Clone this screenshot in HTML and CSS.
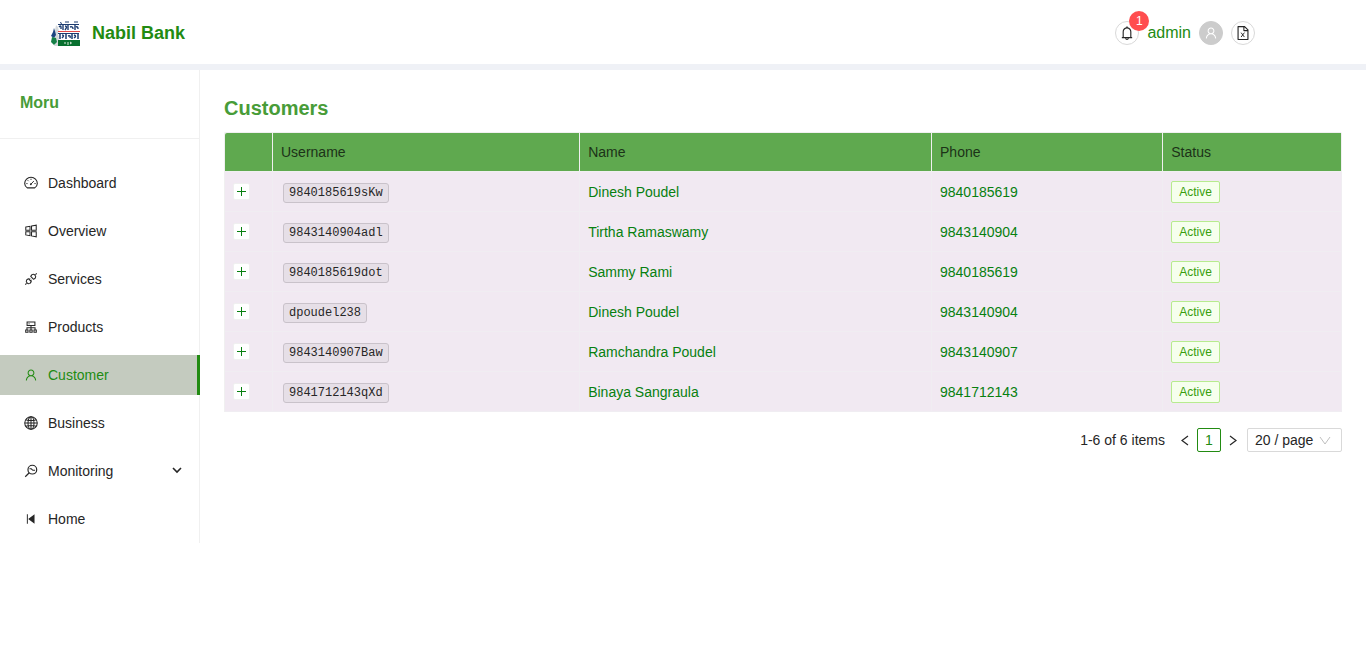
FILE: index.html
```html
<!DOCTYPE html>
<html lang="en">
<head>
<meta charset="utf-8">
<title>Nabil Bank - Customers</title>
<link rel="stylesheet" href="styles.css">
</head>
<body>
<svg class="sprite" aria-hidden="true">
  <symbol id="user" viewBox="0 0 1024 1024"><path fill="currentColor" d="M858.5 763.6a374 374 0 00-80.6-119.5 375.63 375.63 0 00-119.5-80.6c-.4-.2-.8-.3-1.2-.5C719.5 518 760 444.7 760 362c0-137-111-248-248-248S264 225 264 362c0 82.7 40.5 156 102.8 201.1-.4.2-.8.3-1.2.5-44.8 18.9-85 46-119.5 80.6a375.63 375.63 0 00-80.6 119.5A371.7 371.7 0 00136 901.8a8 8 0 008 8.2h60c4.4 0 7.9-3.5 8-7.8 2-77.2 33-149.5 87.8-204.3 56.7-56.7 132-87.9 212.2-87.9s155.5 31.2 212.2 87.9C779 752.7 810 825 812 902.2c.1 4.4 3.6 7.8 8 7.8h60a8 8 0 008-8.2c-1-47.8-10.9-94.3-29.5-138.2zM512 534c-45.9 0-89.1-17.9-121.6-50.4S340 407.9 340 362c0-45.9 17.9-89.1 50.4-121.6S466.1 190 512 190s89.1 17.9 121.6 50.4S684 316.1 684 362c0 45.9-17.9 89.1-50.4 121.6S557.9 534 512 534z"/></symbol>
  <symbol id="bell" viewBox="0 0 1024 1024"><path fill="currentColor" d="M816 768h-24V428c0-141.1-104.3-257.7-240-277.1V112c0-22.1-17.9-40-40-40s-40 17.900-40 40v38.900c-135.700 19.400-240 136-240 277.100v340h-24c-17.700 0-32 14.300-32 32v32c0 4.400 3.600 8 8 8h216c0 61.800 50.200 112 112 112s112-50.200 112-112h216c4.400 0 8-3.600 8-8v-32c0-17.700-14.300-32-32-32zM512 888c-26.500 0-48-21.500-48-48h96c0 26.500-21.500 48-48 48zM304 768V428c0-55.600 21.600-107.800 60.900-147.100S456.400 220 512 220c55.600 0 107.800 21.600 147.100 60.900S720 372.400 720 428v340H304z"/></symbol>
  <symbol id="sheet" viewBox="0 0 1024 1024"><path fill="currentColor" d="M854.6 288.6L639.4 73.4c-6-6-14.1-9.4-22.6-9.4H192c-17.7 0-32 14.3-32 32v832c0 17.7 14.3 32 32 32h640c17.7 0 32-14.3 32-32V311.3c0-8.5-3.4-16.7-9.4-22.7zM790.2 326H602V137.8L790.2 326zm1.8 562H232V136h302v216a42 42 0 0042 42h216v494z"/><path fill="none" stroke="currentColor" stroke-width="60" d="M390 490L600 770M600 490L390 770"/></symbol>
  <symbol id="dashboard" viewBox="0 0 1024 1024"><g fill="none" stroke="currentColor" stroke-width="80"><path d="M240 870C125 790 50 680 50 550a462 462 0 01924 0c0 130-75 240-190 320z" stroke-linejoin="round"/><path d="M512 200v90M170 552h90M764 552h90M270 310l64 64M512 590L720 370" stroke-width="68"/></g><circle cx="500" cy="600" r="68" fill="currentColor"/></symbol>
  <symbol id="windows" viewBox="0 0 1024 1024"><path fill="none" stroke="currentColor" stroke-width="76" d="M130 225l310-55v290H130zM550 152l345-64v372H550zM130 565h310v290l-310-55zM550 565h345v372l-345-64z"/></symbol>
  <symbol id="api" viewBox="0 0 1024 1024"><g fill="none" stroke="currentColor" stroke-width="76" stroke-linejoin="round"><path d="M490 320L704 534 830 440A180 180 0 00584 194zM534 704L320 490 194 584A180 180 0 00440 830zM840 184l90-90M184 840l-90 90M380 550l75-75M474 644l75-75"/></g></symbol>
  <symbol id="cluster" viewBox="0 0 1024 1024"><g fill="none" stroke="currentColor" stroke-width="76"><path d="M226 144h572v262H226zM512 406v318M216 724V564h592v160M124 724h170v170H124zM427 724h170v170H427zM730 724h170v170H730z"/></g><circle cx="370" cy="276" r="46" fill="currentColor"/></symbol>
  <symbol id="globe" viewBox="0 0 1024 1024"><g fill="none" stroke="currentColor" stroke-width="76"><circle cx="512" cy="512" r="458"/><ellipse cx="512" cy="512" rx="220" ry="458"/><path d="M512 60v900M60 512h900M130 270q382 130 764 0M130 754q382-130 764 0"/></g></symbol>
  <symbol id="monitor" viewBox="0 0 1024 1024"><g fill="none" stroke="currentColor" stroke-width="86"><circle cx="610" cy="414" r="320"/><path d="M385 640L90 935"/><path d="M400 350h130l120 110h160" stroke-width="76"/></g></symbol>
  <symbol id="back" viewBox="0 0 1024 1024"><path fill="currentColor" d="M210 165h70v694h-70zM770 160v704L330 528q-16-16 0-32z"/></symbol>
  <symbol id="chevron" viewBox="0 0 12 12"><path d="M1 2l5 7 5-7" fill="none" stroke="currentColor"/></symbol>
  <symbol id="plus" viewBox="0 0 15 15"><path d="M3 7.5h9M7.5 3v9" fill="none" stroke="currentColor"/></symbol>
</svg>

<header class="header">
  <div class="brand">
    <svg class="logo" viewBox="0 0 30 26" aria-hidden="true">
      <path fill="#d5d9dc" d="M6 4q4 3 2 9 2 4 0 12H4q3-5 0-9 1-7 2-12z"/>
      <path fill="#1c4480" d="M4 7l1 3 1 4-2 3-3-2 2-4z"/>
      <path fill="#168047" d="M2 16l4 1 1 4-3 3-3-3z"/>
      <g fill="none" stroke="#1d3c70">
        <path d="M10 1.500l2 1M15 1h4M24 1h4"/>
        <path d="M8 3.500h21" stroke-width="1"/>
        <path d="M9 6q2-2 2 0v2M13 4v5M15 5q3 0 0 4M18 4v5M20 6q3-1 3 2M25 4v5M26 6q2-1 2 2" stroke-width="1.400"/>
        <path d="M8 12.500h21" stroke-width="1"/>
        <path d="M10 13v5M12 14q3 0 0 3M16 13v5M18 15q3-1 2 2M22 13v5M24 14q3 1 0 3M28 13v5" stroke-width="1.500"/>
      </g>
      <path fill="#e04848" d="M8 10h22v1H8z"/>
      <path fill="#08702f" d="M8 19h22v6H8z"/>
      <path d="M14 22h2M18 21v3M20 21q3 1 0 2" fill="none" stroke="#dcebdd"/>
    </svg>
    <span>Nabil Bank</span>
  </div>
  <div class="tools">
    <button class="round" type="button" aria-label="Notifications"><svg class="icon"><use href="#bell"/></svg><span class="badge">1</span></button>
    <span class="account">admin</span>
    <span class="round avatar"><svg class="icon"><use href="#user"/></svg></span>
    <button class="round" type="button" aria-label="Export to spreadsheet"><svg class="icon"><use href="#sheet"/></svg></button>
  </div>
</header>

<div class="layout">
  <aside class="sidebar">
    <div class="group">Moru</div>
    <nav class="menu">
      <a class="item" href="#"><svg class="icon"><use href="#dashboard"/></svg>Dashboard</a>
      <a class="item" href="#"><svg class="icon"><use href="#windows"/></svg>Overview</a>
      <a class="item" href="#"><svg class="icon"><use href="#api"/></svg>Services</a>
      <a class="item" href="#"><svg class="icon"><use href="#cluster"/></svg>Products</a>
      <a class="item selected" href="#" aria-current="page"><svg class="icon"><use href="#user"/></svg>Customer</a>
      <a class="item" href="#"><svg class="icon"><use href="#globe"/></svg>Business</a>
      <button class="item" type="button" aria-expanded="false"><svg class="icon"><use href="#monitor"/></svg>Monitoring<svg class="expand" viewBox="0 0 10 10"><path d="M1 2l4 4 4-4" fill="none" stroke="currentColor" stroke-width="1.600"/></svg></button>
      <a class="item" href="#"><svg class="icon"><use href="#back"/></svg>Home</a>
    </nav>
  </aside>

  <main class="content">
    <h1 class="title">Customers</h1>
    <table class="table">
      <colgroup><col class="col-open"><col class="col-user"><col class="col-name"><col class="col-phone"><col></colgroup>
      <thead><tr><th></th><th>Username</th><th>Name</th><th>Phone</th><th>Status</th></tr></thead>
      <tbody>
        <tr><td><button class="open" type="button" aria-label="Expand row"><svg><use href="#plus"/></svg></button></td><td><code class="code">9840185619sKw</code></td><td>Dinesh Poudel</td><td>9840185619</td><td><span class="tag">Active</span></td></tr>
        <tr><td><button class="open" type="button" aria-label="Expand row"><svg><use href="#plus"/></svg></button></td><td><code class="code">9843140904adl</code></td><td>Tirtha Ramaswamy</td><td>9843140904</td><td><span class="tag">Active</span></td></tr>
        <tr><td><button class="open" type="button" aria-label="Expand row"><svg><use href="#plus"/></svg></button></td><td><code class="code">9840185619dot</code></td><td>Sammy Rami</td><td>9840185619</td><td><span class="tag">Active</span></td></tr>
        <tr><td><button class="open" type="button" aria-label="Expand row"><svg><use href="#plus"/></svg></button></td><td><code class="code">dpoudel238</code></td><td>Dinesh Poudel</td><td>9843140904</td><td><span class="tag">Active</span></td></tr>
        <tr><td><button class="open" type="button" aria-label="Expand row"><svg><use href="#plus"/></svg></button></td><td><code class="code">9843140907Baw</code></td><td>Ramchandra Poudel</td><td>9843140907</td><td><span class="tag">Active</span></td></tr>
        <tr><td><button class="open" type="button" aria-label="Expand row"><svg><use href="#plus"/></svg></button></td><td><code class="code">9841712143qXd</code></td><td>Binaya Sangraula</td><td>9841712143</td><td><span class="tag">Active</span></td></tr>
      </tbody>
    </table>
    <div class="pagination">
      <span class="total">1-6 of 6 items</span>
      <button class="page" type="button" aria-label="Previous page"><svg viewBox="0 0 12 12"><path d="M9 2L3 6.500 9 11" fill="none" stroke="currentColor" stroke-width="1.200"/></svg></button>
      <button class="page current" type="button">1</button>
      <button class="page" type="button" aria-label="Next page"><svg viewBox="0 0 12 12"><path d="M3 2l6 4.500L3 11" fill="none" stroke="currentColor" stroke-width="1.200"/></svg></button>
      <span class="size">
        <select class="size-select" aria-label="Page size"><option>20 / page</option><option>50 / page</option></select>
        <svg class="size-arrow"><use href="#chevron"/></svg>
      </span>
    </div>
  </main>
</div>
</body>
</html>
```
FILE: styles.css
```css
* { box-sizing: border-box; }

body {
  margin: 0;
  background: #fff;
  color: #262626;
  font: 14px/22px "Liberation Sans", Arial, sans-serif;
}

button, select { font: inherit; color: inherit; margin: 0; cursor: pointer; }
svg { display: block; flex: none; }
.sprite { position: absolute; width: 0; height: 0; }
.icon { width: 14px; height: 14px; }

.header {
  display: flex;
  align-items: center;
  justify-content: space-between;
  height: 70px;
  padding: 2px 111px 0 50px;
  border-bottom: 6px solid #eff1f6;
}
.brand {
  display: flex;
  align-items: center;
  gap: 12px;
  color: #228b12;
  font-size: 18px;
  font-weight: bold;
}
.logo { width: 30px; height: 26px; margin-top: 2px; }
.tools { display: flex; align-items: center; gap: 8px; }
.round {
  position: relative;
  display: flex;
  align-items: center;
  justify-content: center;
  width: 24px;
  height: 24px;
  padding: 0;
  border: 1px solid #d9d9d9;
  border-radius: 50%;
  background: #fff;
}
.round .icon { width: 16px; height: 16px; }
.avatar { border-color: #ccc; background: #ccc; color: #fff; }
.round.avatar .icon { width: 14px; height: 14px; }
.badge {
  position: absolute;
  top: -11px;
  right: -11px;
  width: 20px;
  height: 20px;
  border-radius: 10px;
  background: #ff4d4f;
  color: #fff;
  font-size: 12px;
  line-height: 20px;
  text-align: center;
}
.account { color: #228b12; font-size: 16px; }

.layout { display: flex; align-items: flex-start; }
.sidebar { flex: none; width: 200px; border-right: 1px solid #f0f0f0; }
.group {
  padding: 22px 20px 24px;
  border-bottom: 1px solid #f0f0f0;
  color: #489c38;
  font-size: 16px;
  font-weight: bold;
}
.menu {
  display: flex;
  flex-direction: column;
  gap: 8px;
  margin-right: -1px;
  padding: 24px 0 4px;
}
.item {
  display: flex;
  align-items: center;
  gap: 10px;
  height: 40px;
  padding: 0 18px 0 24px;
  border: 0;
  background: none;
  color: #262626;
  text-decoration: none;
}
.selected {
  border-right: 3px solid #228b12;
  background: #c4cbbf;
  color: #228b12;
}
.expand { width: 10px; height: 10px; margin-left: auto; }

.content { flex: 1; min-width: 0; padding: 24px; }
.title { margin: 0 0 10px; color: #489c38; font-size: 20px; line-height: 28px; }

.table {
  width: 100%;
  table-layout: fixed;
  border: 1px solid #f0f0f0;
  border-width: 1px 0 0 1px;
  border-radius: 2px 2px 0 0;
  border-spacing: 0;
}
.col-open { width: 48px; }
.col-user { width: 27.5%; }
.col-name { width: 31.5%; }
.col-phone { width: 20.7%; }
.table th, .table td {
  height: 40px;
  padding: 0 8px;
  border: 1px solid #f0edf2;
  border-width: 0 1px 1px 0;
  background: #f1e9f2;
  color: #07800f;
  text-align: left;
}
.table th { height: 39px; border-color: #f0f0f0; background: #5fa94f; color: #1c3218; font-weight: normal; }
.table th:first-child { border-top-left-radius: 2px; }
.open {
  display: flex;
  align-items: center;
  justify-content: center;
  width: 17px;
  height: 17px;
  padding: 0;
  border: 1px solid #f0f0f0;
  border-radius: 2px;
  background: #fff;
  color: #07800f;
}
.open svg { width: 15px; height: 15px; }
.code {
  display: block;
  width: max-content;
  margin: 2px 2px 0;
  padding: 0 5px;
  border: 1px solid #c9c2ca;
  border-radius: 3px;
  background: #e6dfe7;
  color: #262626;
  font: 12px/18px "Liberation Mono", monospace;
}
.tag {
  display: block;
  width: max-content;
  padding: 0 7px;
  border: 1px solid #b7eb8f;
  border-radius: 2px;
  background: #f6ffed;
  color: #389e0d;
  font-size: 12px;
  line-height: 20px;
}

.pagination { display: flex; align-items: center; justify-content: flex-end; margin-top: 16px; }
.total { margin-right: 8px; }
.page {
  display: flex;
  align-items: center;
  justify-content: center;
  width: 24px;
  height: 24px;
  padding: 0;
  border: 0;
  border-radius: 2px;
  background: none;
}
.page svg { width: 12px; height: 12px; }
.current { border: 1px solid #228b12; color: #228b12; }
.size { position: relative; margin-left: 2px; }
.size-select {
  display: block;
  width: 95px;
  height: 24px;
  padding: 0 7px;
  border: 1px solid #d9d9d9;
  border-radius: 2px;
  appearance: none;
  background: #fff;
}
.size-arrow {
  position: absolute;
  top: 7px;
  right: 11px;
  width: 12px;
  height: 12px;
  color: #bfbfbf;
  pointer-events: none;
}
```
